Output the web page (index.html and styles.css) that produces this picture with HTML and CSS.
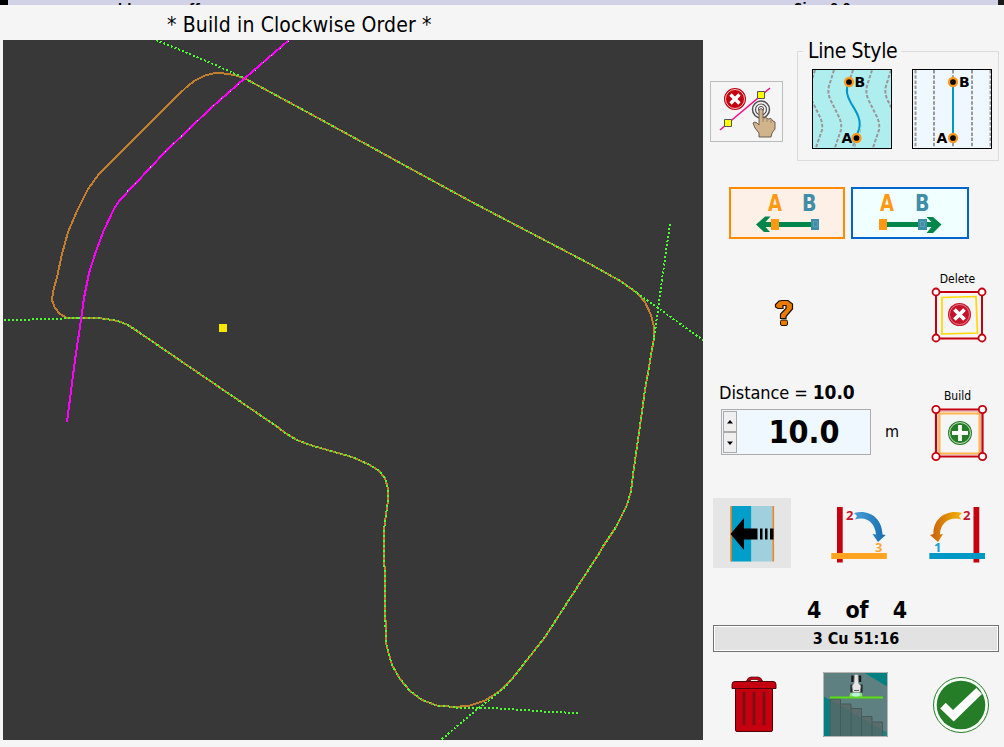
FILE: index.html
```html
<!DOCTYPE html>
<html lang="en">
<head>
<meta charset="utf-8">
<title>Build in Clockwise Order</title>
<link rel="stylesheet" href="styles.css">
</head>
<body>
<header class="strip"><span class="strip-a">ld</span><span class="strip-b">ff</span><span class="strip-c">Size: 0.0</span></header>
<div class="window">
  <main class="left">
    <h1 class="title">* Build in Clockwise Order *</h1>
    <svg class="map" viewBox="3 40 700 700" fill="none" shape-rendering="crispEdges">
      <path class="boundary" d="M234 75L221 73L213 73.500L205 75.500L195 80.500L186 87.500L156 117L122 151L99 174L88 189L77 211L68 232L62 254L57 277L53 292L52 300L55 308L60 314L67 318H98L106 319L118 321L128 325L137 331L279 428L285 433L297 440L310 445L331 451L352 457L368 464L378 470L385 478L388 489V500L387 508L385 522L384 530V565L385 568V615L386 625V643L388 651L392 665L400 679L410 691L422 700L437 705.500L455 707L470 705.500L485 700.500L500 691L512 679L523 665L545 637L600 552L602 548L616 527L627 505L631 491L633 475L645 390L654 338V327L651 315L645 302L637 293L622 282L590 264L468 200L350 135.500L283 99L244 78Z"/>
      <path class="track" d="M244 78L283 99L350 135.500L468 200L590 264L622 282L637 293M654 338L645 390L633 475L631 491L627 505L616 527L602 548L600 552L545 637L523 665L512 679L505 687M455 707L437 705.500L422 700L410 691L400 679L392 665L388 651L386 643L385 615V568L384 565V530L385 522L387 508L388 500V489L385 478L378 470L368 464L352 457L331 451L310 445L297 440L285 433L279 428L137 331L128 325L118 321L106 319L98 318H78"/>
      <path class="tail" d="M156 40L180 50L205 60.500L231 72L244 78M637 293L658 308L703 340M670 224L664 265L659 303L654 338M505 687L488 701L475 711L441 740M578 713L551 712L524 710L500 708.500L480 707.500H455M78 318L32 319.500L3 320"/>
      <path class="active-line" d="M289 40L245 78L211 108L165 152L120 200L115 207L104 230L95 254L89 273L84 298L81 320L75 360L67 422"/>
      <path class="specks" d="M289 41L245 79L206 112L165 152L120 199"/>
      <rect x="219" y="324" width="8" height="8" fill="#f5e700"/>
    </svg>
  </main>

  <aside class="panel">
    <section class="style-row">
      <button class="icon-btn pick">
        <svg viewBox="711 82 71 59" width="71" height="59">
          <path d="M720 130L770 88" stroke="#f0148c" stroke-width="1.600"/>
          <circle cx="735" cy="99" r="11" fill="#c5000f"/><circle cx="735" cy="99" r="9.500" fill="none" stroke="#f5f5f5" stroke-width=".8"/>
          <path d="M730.500 94.500L739.500 103.500M739.500 94.500L730.500 103.500" stroke="#fff" stroke-width="3.400"/>
          <path d="M724.500 119.500h7v7h-7zM757.500 91.500h7v7h-7z" fill="#ff0" stroke="#555"/>
          <g fill="none" stroke="#505050"><circle cx="761" cy="109.500" r="8.500" stroke-width="1.500"/><circle cx="761" cy="109.500" r="5.500" stroke-width="1.200"/><circle cx="761" cy="109" r="2.600" fill="#eee"/></g>
          <path d="M759 110Q761 107 763 110V118L766 117.500L768 119L771 118.500L773 121L775 122V129L772 133L771 137H759V133L755 128L753 123Q755 121 757 123L759 125Z" fill="#d2b48c" stroke="#5b5148" stroke-width=".9"/>
          <path d="M763 117V122M767 119V122M771 120V123" stroke="#8b7862" stroke-width=".8"/>
        </svg>
      </button>
      <fieldset class="style-group">
        <legend>Line Style</legend>
        <button class="icon-btn style-btn curve">
          <svg viewBox="813 70 78 78" width="78" height="78" fill="none">
            <g stroke="#999" stroke-width="2" stroke-dasharray="3.500 1.700">
              <path id="wave" d="M834 70L829 86Q827 93 831 101L839 117Q842 123 841 130L834.500 149"/>
              <use href="#wave" x="-19"/><use href="#wave" x="19"/><use href="#wave" x="38"/><use href="#wave" x="57"/><use href="#wave" x="-38"/>
            </g>
            <path d="M853 70L847.500 87Q846 94 850 101L857.500 116Q861 123 859 130L852 149" stroke="#afeeee" stroke-width="3"/>
            <path d="M853 70L849 82M856 138L852 149" stroke="#999" stroke-width="2" stroke-dasharray="3.500 1.700"/>
            <path d="M849 82C845 90 847 96 851 103S862 119 859 129L856 138" stroke="#0096c8" stroke-width="2"/>
            <g fill="#000" stroke="#ff9a1f" stroke-width="2.300"><circle cx="849" cy="82" r="4"/><circle cx="856.500" cy="138" r="4"/></g>
            <g class="ab-small"><text x="854.500" y="87" textLength="9.500">B</text><text x="841.500" y="143" textLength="10.500">A</text></g>
          </svg>
        </button>
        <button class="icon-btn style-btn straight">
          <svg viewBox="913 70 78 78" width="78" height="78" fill="none">
            <path d="M915.500 70V149M934 70V149M953 70V149M972 70V149M990.500 70V149" stroke="#999" stroke-width="2" stroke-dasharray="3.500 1.700"/>
            <path d="M953 82V138" stroke="#0096c8" stroke-width="2"/>
            <g fill="#000" stroke="#ff9a1f" stroke-width="2.300"><circle cx="953" cy="82" r="4"/><circle cx="953" cy="138" r="4"/></g>
            <g class="ab-small"><text x="959" y="87" textLength="9.500">B</text><text x="936.500" y="143" textLength="10.500">A</text></g>
          </svg>
        </button>
      </fieldset>
    </section>

    <section class="direction-row">
      <button class="icon-btn dir dir-a">
        <svg viewBox="731 189 112 48" width="112" height="48">
          <g class="ab-large"><text x="768" y="211" textLength="14" lengthAdjust="spacingAndGlyphs" fill="#ff9914">A</text><text x="802" y="211" textLength="14.500" lengthAdjust="spacingAndGlyphs" fill="#408da8">B</text></g>
          <path d="M756 224.500L765 216.500H770.500L765.500 222H813V227H765.500L770 232H764Z" fill="#00854a"/>
          <rect x="771" y="219" width="8" height="11" fill="#ff9914"/><rect x="811" y="219" width="8" height="11" fill="#408da8"/><rect x="813.500" y="221.500" width="4" height="5" fill="none" stroke="#5b9fb6"/>
        </svg>
      </button>
      <button class="icon-btn dir dir-b">
        <svg viewBox="853 189 114 48" width="114" height="48">
          <g class="ab-large"><text x="880" y="211" textLength="14" lengthAdjust="spacingAndGlyphs" fill="#ff9914">A</text><text x="915" y="211" textLength="14.500" lengthAdjust="spacingAndGlyphs" fill="#408da8">B</text></g>
          <path d="M941.500 224.500L933 217H926.500L931.500 222H885V227H931.500L926.500 233H933Z" fill="#00854a"/>
          <rect x="879" y="219" width="8" height="11" fill="#ff9914"/><rect x="918" y="219" width="9" height="11" fill="#408da8"/><rect x="920.500" y="221.500" width="4" height="5" fill="none" stroke="#5b9fb6"/>
        </svg>
      </button>
    </section>

    <section class="action-row delete-row">
      <svg class="help" viewBox="774 299 21 28" width="21" height="28">
        <path d="M775.500 307V304.500L779 301L782 300.500H788L792.500 304V309L789 313L786 316.500V318.500H780.500V314L786 308.500V305.500H783V308.500H778Z" fill="#e97a00" stroke="#1b1200" stroke-width="1.200"/>
        <rect x="780.500" y="320" width="7" height="5.500" rx="1.500" fill="#e97a00" stroke="#1b1200"/>
      </svg>
      <div class="labelled"><span class="caption">Delete</span>
        <svg viewBox="930 287 58 58" width="58" height="58" fill="none">
          <path d="M942 297.500L976 296.500L977.500 333L942 334Z" stroke="#ffd900" stroke-width="1.700"/>
          <path d="M936 292H982V338.500H936Z" stroke="#c5000f" stroke-width="2"/>
          <g fill="#fff" stroke="#c5000f" stroke-width="1.800"><circle cx="936" cy="292" r="3.500"/><circle cx="982" cy="292" r="3.500"/><circle cx="936" cy="338" r="3.500"/><circle cx="982" cy="338" r="3.500"/></g>
          <circle cx="959.500" cy="314.500" r="11.500" fill="#c5142a"/><circle cx="959.500" cy="314.500" r="10" stroke="#e8a0a8" stroke-width=".8"/>
          <path d="M954.500 309.500L964.500 319.500M964.500 309.500L954.500 319.500" stroke="#fff" stroke-width="3.800"/>
        </svg>
      </div>
    </section>

    <section class="action-row build-row">
      <div class="distance">
        <div class="distance-label">Distance = <b>10.0</b></div>
        <div class="distance-entry">
          <div class="spinner">
            <div class="steps">
              <button><svg viewBox="0 0 6 4" width="6" height="4"><path d="M0 3.500L3 0L6 3.500Z"/></svg></button>
              <button><svg viewBox="0 0 6 4" width="6" height="4"><path d="M0 .5L3 4L6 .5Z"/></svg></button>
            </div>
            <output>10.0</output>
          </div>
          <span class="unit">m</span>
        </div>
      </div>
      <div class="labelled"><span class="caption">Build</span>
        <svg viewBox="930 404 58 58" width="58" height="58" fill="none">
          <path d="M939.500 413.500H979.500V453.500H939.500Z" stroke="#ffb548" stroke-width="2"/>
          <path d="M936 409.500H982.500V456.500H936Z" stroke="#c5000f" stroke-width="2.200"/><path d="M938 411.500H980.500V455H938Z" stroke="#dda09c" stroke-width=".7"/>
          <g fill="#fff" stroke="#c5000f" stroke-width="1.800"><circle cx="936" cy="409.500" r="3.700"/><circle cx="982.500" cy="409.500" r="3.700"/><circle cx="936" cy="456.500" r="3.700"/><circle cx="982.500" cy="456.500" r="3.700"/></g>
          <circle cx="960" cy="433" r="12" fill="#257d27"/><circle cx="960" cy="433" r="10.500" stroke="#d5e8d5" stroke-width=".9"/>
          <path d="M952 433H968M960 425V441" stroke="#fff" stroke-width="3.800"/>
        </svg>
      </div>
    </section>

    <section class="tool-row">
      <button class="icon-btn shift">
        <svg viewBox="713 498 78 70" width="78" height="70">
          <path d="M731 506H751.500V561.500H731Z" fill="#009fc9"/><path d="M751.500 506H773V561.500H751.500Z" fill="#a0d0dd"/>
          <path d="M731 506V561.500M773.300 506V561.500" stroke="#f58420" stroke-width="1.600"/>
          <path d="M730.500 534L744 518V528.500H757.500V539.500H744V550ZM760 528.500h2.500v11h-2.500zM765 528.500h2.500v11h-2.500zM770 528.500h3.500v11h-3.500z"/>
        </svg>
      </button>
      <svg viewBox="830 503 58 60" width="58" height="60">
        <defs><linearGradient id="blue"><stop offset="0" stop-color="#4c9fd5"/><stop offset="1" stop-color="#166cb0"/></linearGradient></defs>
        <path d="M837 507h5.700v55.500h-5.700z" fill="#c5000f"/><path d="M831.300 553h55.500v6h-55.500z" fill="#ffa420"/>
        <path d="M854 513C870 509 882 519 882.500 534.500L885.700 535L878 542L872.500 534L876 534.500C875 523 867 516 855 519.500L857 516Z" fill="url(#blue)"/>
        <g class="turn"><text x="846" y="520" fill="#c5142a">2</text><text x="875" y="552" fill="#ffa93a">3</text></g>
      </svg>
      <svg viewBox="928 503 58 60" width="58" height="60">
        <defs><linearGradient id="gold"><stop offset="0" stop-color="#c85e0e"/><stop offset="1" stop-color="#f5b400"/></linearGradient></defs>
        <path d="M973.500 507h5.800v55.500h-5.800z" fill="#c5000f"/><path d="M929.300 553h55.700v6h-55.700z" fill="#0098c5"/>
        <path d="M962 513C946 509 933 519 933.500 534L930 535L938 542L943 534L940 534.500C940 523 950 516 961 519.500L959 516Z" fill="url(#gold)"/>
        <g class="turn"><text x="963" y="520" fill="#c5142a">2</text><text x="934" y="552" fill="#1ca0cd">1</text></g>
      </svg>
    </section>

    <div class="count"><span>4</span><span>of</span><span>4</span></div>
    <button class="line-name">3 Cu 51:16</button>

    <footer class="footer-row">
      <svg viewBox="731 678 46 57" width="46" height="57" fill="#c5000f" stroke="#520008">
        <path d="M746.500 683Q748 679 751 679H758Q761 679 762.500 683H759L757 681.500H751L750 683Z" stroke-width=".7"/>
        <path d="M735.500 690H772.500V732Q772.500 733.500 771 733.500H737Q735.500 733.500 735.500 732Z"/>
        <path d="M732 690.500V686.500Q732 683.500 735 683.500H773Q776 683.500 776 686.500V690.500Z"/>
        <path d="M744 695V726M754 695V726M764 695V726" stroke="#7a1015" stroke-width="2.800" stroke-linecap="round"/>
      </svg>
      <svg class="tractor" viewBox="823 672 65 65" width="65" height="65">
        <path d="M823 672h65v65h-65z" fill="#5f8080"/><path d="M863 672H888V687ZM823 696L828 699L888 733V737H823Z" fill="#008080"/>
        <path d="M829 699L888 733V737H829Z" fill="#5f8080" fill-opacity=".35"/>
        <path d="M830 699H840.500V704H851V708.500H861.500V716.500H872V722H882.500V736.500H830Z" fill="#5c6c6c"/>
        <path d="M830 699.500L882.500 730V736.500H830Z" fill="#4b6c6a"/>
        <path d="M830 736.500V699H840.500V737M840.500 704H851V737M851 708.500H861.500V737M861.500 716.500H872V737M872 722H882.500V737" fill="none" stroke="#435b5b"/>
        <path d="M830 697.500H883" stroke="#5be010" stroke-width="2.200"/>
        <path d="M849.500 696.500L850.500 692.500H861.500L862.500 696.500Z" fill="#8de86e"/><ellipse cx="856" cy="694.500" rx="4" ry="2" fill="#b5f5e0"/>
        <path d="M852.500 675.500v6.500M860 675.500v6.500" stroke="#151818" stroke-width="2.400"/>
        <path d="M851.500 684.500v8M861.500 684.500v8" stroke="#202525" stroke-width="2.200"/>
        <path d="M853 678.500H860" stroke="#333"/>
        <path d="M854.500 674.500H858L858.500 683L861 686L860 692.500H853L852 686L854 683Z" fill="#e5e5e5" stroke="#777" stroke-width=".6"/>
        <path d="M854 690.500H859" stroke="#555"/>
        <path d="M823.500 672.500h64v64h-64z" fill="none" stroke="#b5b5b5"/>
      </svg>
      <svg viewBox="932 676 58 58" width="58" height="58">
        <circle cx="961" cy="705" r="27.500" fill="#f9fff9" stroke="#257d27"/><circle cx="961" cy="705" r="24.300" fill="#257d27"/>
        <path d="M940.300 708.500L945.700 702.700L953 710L976.300 688L982 694L953.700 721.500Z" fill="#fff"/>
      </svg>
    </footer>
  </aside>
</div>
</body>
</html>
```
FILE: styles.css
```css
* { box-sizing: border-box; }
body {
  margin: 0; width: 1004px; height: 747px; overflow: hidden;
  background: #f5f5f5; color: #000;
  font-family: "DejaVu Sans Condensed", "DejaVu Sans", sans-serif;
  font-stretch: condensed;
}
svg { display: block; flex: none; }
button { font: inherit; color: inherit; padding: 0; margin: 0; border: 0; background: none; }
.strip {
  height: 5px; overflow: hidden; display: flex; align-items: flex-start;
  border-left: 8px solid #000; border-right: 6px solid #1a1a1a;
  background: #d2d2e6; font-size: 13px; font-weight: bold; line-height: 14px;
}
.strip span { white-space: nowrap; margin-top: 2px; }
.strip-a { margin-left: 110px; width: 71px; letter-spacing: 1px; }
.strip-b { width: 605px; letter-spacing: .6px; }
.strip .strip-c { margin-top: 1px; }
.window { display: flex; height: 742px; }
.left { width: 703px; padding-left: 3px; flex: none; }
.title { height: 35px; margin: 0; padding: 7px 0 0 164px; font-size: 21px; font-weight: normal; line-height: 27px; letter-spacing: .14px; white-space: nowrap; }
.map { width: 700px; height: 700px; background: #383838; }
.boundary { stroke: #c07f30; stroke-width: 2; }
.track { stroke: #4cff31; stroke-width: 2; stroke-dasharray: 2 3; }
.tail { stroke: #4cff31; stroke-width: 2; stroke-dasharray: 2 2; }
.active-line { stroke: #f0f; stroke-width: 2; }
.specks { stroke: #8be8a0; stroke-width: 1; stroke-dasharray: 1 10; }
.panel { flex: 1; padding: 35px 5px 0 7px; }
.style-row { display: flex; justify-content: space-between; align-items: flex-start; height: 121px; }
.pick { margin-top: 41px; width: 73px; height: 61px; border: 1px solid #bbb; }
.style-group {
  width: 202px; height: 121px; margin: 0; padding: 7px 6px 0 14px;
  border: 1px solid #dcdcdc; display: flex; justify-content: space-between; align-items: flex-start; min-width: 0;
}
.style-group legend { margin-left: -9px; padding: 0 4px 0 5px; font-size: 21px; line-height: 22px; letter-spacing: -.35px; white-space: nowrap; }
.style-btn { width: 80px; height: 80px; border: 1px solid #000; }
.curve { background: #afeeee; }
.straight { background: #f0f8ff; }
.ab-small { font: bold 14px "DejaVu Sans", sans-serif; fill: #000; }
.ab-large { font: bold 23px "DejaVu Sans Condensed", sans-serif; }
.direction-row { display: flex; gap: 6px; margin: 26px 0 0 19px; }
.dir { width: 116px; height: 52px; border: 2px solid #ff8c00; background: #fdf0e6; }
.dir-b { width: 118px; border-color: #0066cc; background: #f0ffff; }
.action-row { display: flex; justify-content: space-between; padding-right: 11px; }
.delete-row { margin-top: 33px; height: 73px; padding-left: 64px; }
.help { margin-top: 27px; }
.labelled { width: 58px; display: flex; flex-direction: column; align-items: center; }
.caption { height: 15px; padding-right: 3px; line-height: 15px; font-size: 12px; }
.build-row { margin-top: 37px; height: 81px; padding-left: 9px; align-items: flex-start; }
.build-row .labelled { margin-top: 7px; }
.distance-label { height: 27px; line-height: 20px; font-size: 18px; letter-spacing: -.08px; white-space: pre; }
.distance-label b { font-size: 19px; }
.distance-entry { display: flex; align-items: center; margin-left: 2px; }
.spinner { width: 150px; height: 46px; padding: 1px; display: flex; border: 1px solid #ababab; background: #f0f8ff; }
.steps { width: 14px; display: flex; flex-direction: column; }
.steps button { flex: 1; border: 1px solid #aaa; background: #efefef; display: flex; align-items: center; justify-content: center; }
.spinner output { flex: 1; padding-left: 2px; text-align: center; font-size: 32px; line-height: 42px; font-weight: bold; }
.unit { margin: -2px 0 0 14px; font-size: 16px; }
.tool-row { display: flex; align-items: center; height: 70px; margin: 35px 13px 0 3px; }
.shift { width: 78px; height: 70px; margin-right: 39px; background: #e5e5e5; }
.tool-row > svg + svg { margin-left: 40px; }
.turn { font: bold 13px "Open Sans", sans-serif; }
.count { display: flex; gap: 24px; padding-left: 97px; margin-top: 27px; height: 30px; line-height: 30px; font-size: 23px; font-weight: bold; }
.line-name {
  display: block; width: 286px; height: 27px; margin-left: 3px;
  border: 1px solid #737373; box-shadow: inset 0 0 0 1px #fff; background: #e2e2e2;
  font-size: 16px; font-weight: bold; line-height: 23px; text-align: center;
}
.footer-row { display: flex; justify-content: space-between; align-items: center; height: 65px; margin: 20px 9px 0 21px; }
.tractor { margin-left: 2px; }
```
